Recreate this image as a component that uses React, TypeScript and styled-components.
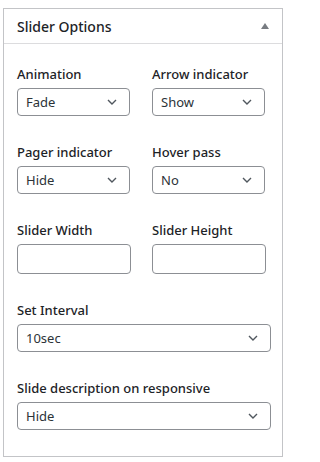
import styled, { createGlobalStyle } from 'styled-components';

const GlobalStyle = createGlobalStyle`
  body {
    margin: 0;
    background: #fff;
    font-family: "Noto Sans", "Open Sans", sans-serif;
    color: #1d2327;
  }
`;

const Page = styled.div`
  padding: 8px 5px 5px 3px;
`;

const Panel = styled.section`
  border: 1px solid #c3c4c7;
  background: #fff;
  width: 280px;
  box-sizing: border-box;
`;

const Header = styled.div`
  display: flex;
  align-items: center;
  justify-content: space-between;
  height: 34px;
  padding: 0 13px 0 13px;
  border-bottom: 1px solid #dcdcde;
`;

const Title = styled.h2`
  margin: 0;
  font-size: 14px;
  font-weight: 500;
  color: #1d2327;
`;

const Toggle = styled.span`
  width: 0;
  height: 0;
  border-left: 4px solid transparent;
  border-right: 4px solid transparent;
  border-bottom: 6px solid #787c82;
`;

const Body = styled.div`
  padding: 21px 11px 26px 13px;
  display: flex;
  flex-direction: column;
  gap: 27px;
`;

const Pair = styled.div`
  display: grid;
  grid-template-columns: 1fr 1fr;
  column-gap: 16px;
`;

const Field = styled.div`
  display: flex;
  flex-direction: column;
  gap: 5px;
`;

const Label = styled.label`
  font-size: 13px;
  line-height: 18px;
  font-weight: 500;
  color: #1d2327;
`;

const SelectBox = styled.div<{ $full?: boolean }>`
  display: flex;
  align-items: center;
  justify-content: space-between;
  box-sizing: border-box;
  width: ${(p) => (p.$full ? '100%' : '113px')};
  height: 28px;
  padding: 0 12px 0 8px;
  border: 1px solid #8c8f94;
  border-radius: 4px;
  font-size: 13px;
  color: #2c3338;
`;

const TextInput = styled.input`
  box-sizing: border-box;
  width: 114px;
  height: 30px;
  border: 1px solid #8c8f94;
  border-radius: 4px;
  padding: 0 8px;
  font: inherit;
`;

const Chevron = () => (
  <svg width="10" height="6" viewBox="0 0 10 6" fill="none">
    <path d="M1 1l4 4 4-4" stroke="#50575e" strokeWidth="1.4" />
  </svg>
);

function Select({ value, full }: { value: string; full?: boolean }) {
  return (
    <SelectBox $full={full}>
      <span>{value}</span>
      <Chevron />
    </SelectBox>
  );
}

export default function App() {
  return (
    <>
      <GlobalStyle />
      <Page>
        <Panel>
          <Header>
            <Title>Slider Options</Title>
            <Toggle />
          </Header>
          <Body>
            <Pair>
              <Field>
                <Label>Animation</Label>
                <Select value="Fade" />
              </Field>
              <Field>
                <Label>Arrow indicator</Label>
                <Select value="Show" />
              </Field>
            </Pair>
            <Pair>
              <Field>
                <Label>Pager indicator</Label>
                <Select value="Hide" />
              </Field>
              <Field>
                <Label>Hover pass</Label>
                <Select value="No" />
              </Field>
            </Pair>
            <Pair>
              <Field>
                <Label>Slider Width</Label>
                <TextInput />
              </Field>
              <Field>
                <Label>Slider Height</Label>
                <TextInput />
              </Field>
            </Pair>
            <Field>
              <Label>Set Interval</Label>
              <Select value="10sec" full />
            </Field>
            <Field>
              <Label>Slide description on responsive</Label>
              <Select value="Hide" full />
            </Field>
          </Body>
        </Panel>
      </Page>
    </>
  );
}
